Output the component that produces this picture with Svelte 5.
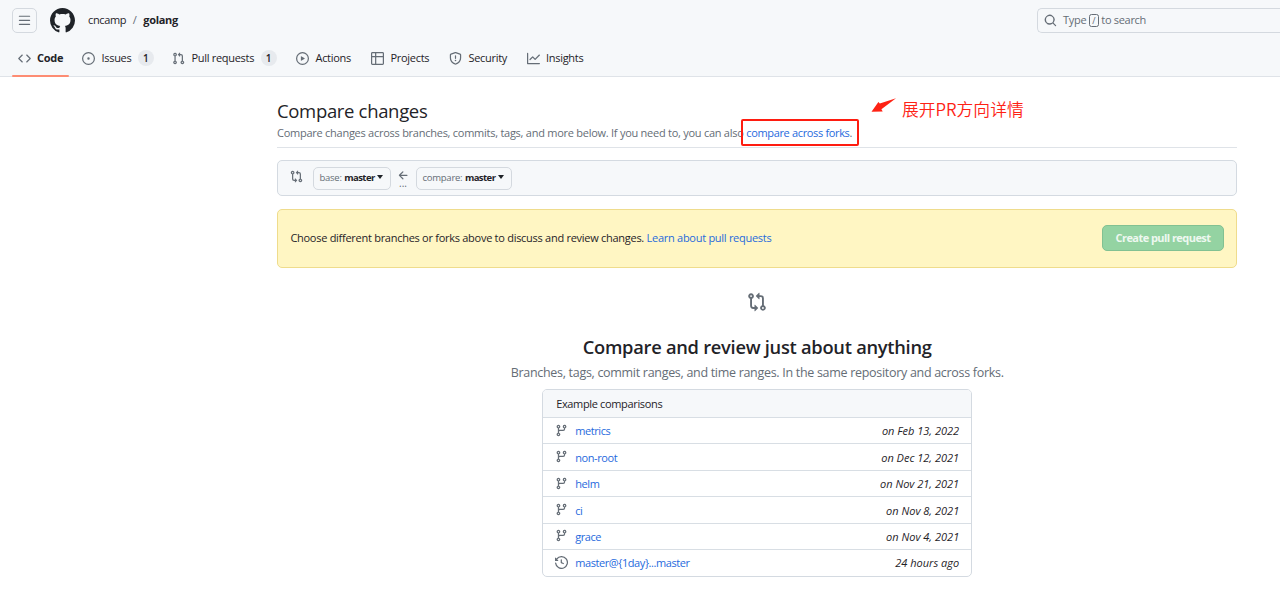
<script>
  const icons = {
    code: 'm11.28 3.22 4.25 4.25a.75.75 0 0 1 0 1.06l-4.25 4.25a.749.749 0 0 1-1.275-.326.749.749 0 0 1 .215-.734L13.94 8l-3.72-3.72a.749.749 0 0 1 .326-1.275.749.749 0 0 1 .734.215Zm-6.56 0a.751.751 0 0 1 1.042.018.751.751 0 0 1 .018 1.042L2.06 8l3.72 3.72a.749.749 0 0 1-.326 1.275.749.749 0 0 1-.734-.215L.47 8.53a.75.75 0 0 1 0-1.06Z',
    issue: 'M8 9.5a1.5 1.5 0 1 0 0-3 1.5 1.5 0 0 0 0 3Z M8 0a8 8 0 1 1 0 16A8 8 0 0 1 8 0ZM1.5 8a6.5 6.5 0 1 0 13 0 6.5 6.5 0 0 0-13 0Z',
    pull: 'M1.5 3.25a2.25 2.25 0 1 1 3 2.122v5.256a2.251 2.251 0 1 1-1.5 0V5.372A2.25 2.25 0 0 1 1.5 3.25Zm5.677-.177L9.573.677A.25.25 0 0 1 10 .854V2.5h1A2.5 2.5 0 0 1 13.5 5v5.628a2.251 2.251 0 1 1-1.5 0V5a1 1 0 0 0-1-1h-1v1.646a.25.25 0 0 1-.427.177L7.177 3.427a.25.25 0 0 1 0-.354ZM3.75 2.5a.75.75 0 1 0 0 1.5.75.75 0 0 0 0-1.5Zm0 9.5a.75.75 0 1 0 0 1.5.75.75 0 0 0 0-1.5Zm8.25.75a.75.75 0 1 0 1.5 0 .75.75 0 0 0-1.5 0Z',
    play: 'M8 0a8 8 0 1 1 0 16A8 8 0 0 1 8 0ZM1.5 8a6.5 6.5 0 1 0 13 0 6.5 6.5 0 0 0-13 0Zm4.879-2.773 4.264 2.559a.25.25 0 0 1 0 .428l-4.264 2.559A.25.25 0 0 1 6 10.559V5.442a.25.25 0 0 1 .379-.215Z',
    table: 'M0 1.75C0 .784.784 0 1.75 0h12.5C15.216 0 16 .784 16 1.75v12.5A1.75 1.75 0 0 1 14.25 16H1.75A1.75 1.75 0 0 1 0 14.25ZM6.5 6.5v8h7.75a.25.25 0 0 0 .25-.25V6.5Zm8-1.5V1.75a.25.25 0 0 0-.25-.25H6.5V5Zm-13 1.5v7.75c0 .138.112.25.25.25H5v-8ZM5 5V1.5H1.75a.25.25 0 0 0-.25.25V5Z',
    shield: 'M7.467.133a1.748 1.748 0 0 1 1.066 0l5.25 1.68A1.75 1.75 0 0 1 15 3.48V7c0 1.566-.32 3.182-1.303 4.682-.983 1.498-2.585 2.813-5.032 3.855a1.697 1.697 0 0 1-1.33 0c-2.447-1.042-4.049-2.357-5.032-3.855C1.32 10.182 1 8.566 1 7V3.48a1.75 1.75 0 0 1 1.217-1.667Zm.61 1.429a.25.25 0 0 0-.153 0l-5.25 1.68a.25.25 0 0 0-.174.238V7c0 1.358.275 2.666 1.057 3.86.784 1.194 2.121 2.34 4.366 3.297a.196.196 0 0 0 .154 0c2.245-.956 3.582-2.104 4.366-3.298C13.225 9.666 13.5 8.36 13.5 7V3.48a.251.251 0 0 0-.174-.237l-5.25-1.68ZM8.75 4.75v3a.75.75 0 0 1-1.5 0v-3a.75.75 0 0 1 1.5 0ZM9 10.5a1 1 0 1 1-2 0 1 1 0 0 1 2 0Z',
    graph: 'M1.5 1.75V13.5h13.75a.75.75 0 0 1 0 1.5H.75a.75.75 0 0 1-.75-.75V1.75a.75.75 0 0 1 1.5 0Zm14.28 2.53-5.25 5.25a.75.75 0 0 1-1.06 0L7 7.06 4.28 9.78a.751.751 0 0 1-1.042-.018.751.751 0 0 1-.018-1.042l3.25-3.25a.75.75 0 0 1 1.06 0L10 7.94l4.72-4.72a.751.751 0 0 1 1.042.018.751.751 0 0 1 .018 1.042Z',
    menu: 'M1 2.75A.75.75 0 0 1 1.75 2h12.5a.75.75 0 0 1 0 1.5H1.75A.75.75 0 0 1 1 2.75Zm0 5A.75.75 0 0 1 1.75 7h12.5a.75.75 0 0 1 0 1.5H1.75A.75.75 0 0 1 1 7.75ZM1.75 12h12.5a.75.75 0 0 1 0 1.5H1.75a.75.75 0 0 1 0-1.5Z',
    search: 'M10.68 11.74a6 6 0 0 1-7.922-8.982 6 6 0 0 1 8.982 7.922l3.04 3.04a.749.749 0 0 1-.326 1.275.749.749 0 0 1-.734-.215ZM11.5 7a4.499 4.499 0 1 0-8.997 0A4.499 4.499 0 0 0 11.5 7Z',
    mark: 'M8 0c4.42 0 8 3.58 8 8a8.013 8.013 0 0 1-5.45 7.59c-.4.08-.55-.17-.55-.38 0-.27.01-1.13.01-2.2 0-.75-.25-1.23-.54-1.48 1.78-.2 3.65-.88 3.65-3.95 0-.88-.31-1.59-.82-2.15.08-.2.36-1.02-.08-2.12 0 0-.67-.22-2.2.82-.64-.18-1.32-.27-2-.27-.68 0-1.36.09-2 .27-1.53-1.03-2.2-.82-2.2-.82-.44 1.1-.16 1.92-.08 2.12-.51.56-.82 1.28-.82 2.15 0 3.06 1.86 3.75 3.64 3.95-.23.2-.44.55-.51 1.07-.46.21-1.61.55-2.33-.66-.15-.24-.6-.83-1.23-.82-.67.01-.27.38.01.53.34.19.73.9.82 1.13.16.45.68 1.31 2.69.94 0 .67.01 1.3.01 1.49 0 .21-.15.45-.55.38A7.995 7.995 0 0 1 0 8c0-4.42 3.58-8 8-8Z',
    compare: 'M9.573.677A.25.25 0 0 1 10 .854V2.5h1A2.5 2.5 0 0 1 13.5 5v5.628a2.251 2.251 0 1 1-1.5 0V5a1 1 0 0 0-1-1h-1v1.646a.25.25 0 0 1-.427.177L7.177 3.427a.25.25 0 0 1 0-.354ZM6 12v-1.646a.25.25 0 0 1 .427-.177l2.396 2.396a.25.25 0 0 1 0 .354l-2.396 2.396A.25.25 0 0 1 6 15.146V13.5H5A2.5 2.5 0 0 1 2.5 11V5.372a2.25 2.25 0 1 1 1.5 0V11a1 1 0 0 0 1 1ZM4 3.25a.75.75 0 1 0-1.5 0 .75.75 0 0 0 1.5 0ZM12.75 12a.75.75 0 1 0 0 1.5.75.75 0 0 0 0-1.5Z',
    arrow: 'M7.78 12.53a.75.75 0 0 1-1.06 0L2.47 8.28a.75.75 0 0 1 0-1.06l4.25-4.25a.751.751 0 0 1 1.042.018.751.751 0 0 1 .018 1.042L4.81 7h7.44a.75.75 0 0 1 0 1.5H4.81l2.97 2.97a.75.75 0 0 1 0 1.06Z',
    branch: 'M9.5 3.25a2.25 2.25 0 1 1 3 2.122V6A2.5 2.5 0 0 1 10 8.5H6a1 1 0 0 0-1 1v1.128a2.251 2.251 0 1 1-1.5 0V5.372a2.25 2.25 0 1 1 1.5 0v1.836A2.493 2.493 0 0 1 6 7h4a1 1 0 0 0 1-1v-.628A2.25 2.25 0 0 1 9.5 3.25Zm-6 0a.75.75 0 1 0 1.5 0 .75.75 0 0 0-1.5 0Zm8.25-.75a.75.75 0 1 0 0 1.5.75.75 0 0 0 0-1.5ZM4.25 12a.75.75 0 1 0 0 1.5.75.75 0 0 0 0-1.5Z',
    history: 'm.427 1.927 1.215 1.215a8.002 8.002 0 1 1-1.6 5.685.75.75 0 1 1 1.493-.154 6.5 6.5 0 1 0 1.18-4.458l1.358 1.358A.25.25 0 0 1 3.896 6H.25A.25.25 0 0 1 0 5.75V2.104a.25.25 0 0 1 .427-.177ZM7.75 4a.75.75 0 0 1 .75.75v2.992l2.028.812a.75.75 0 0 1-.557 1.392l-2.5-1A.751.751 0 0 1 7 8.25v-3.5A.75.75 0 0 1 7.75 4Z',
  };

  const tabs = [
    { label: 'Code', icon: 'code', width: 64, active: true },
    { label: 'Issues', icon: 'issue', width: 90, count: 1 },
    { label: 'Pull requests', icon: 'pull', width: 124, count: 1 },
    { label: 'Actions', icon: 'play', width: 75 },
    { label: 'Projects', icon: 'table', width: 78 },
    { label: 'Security', icon: 'shield', width: 77.5 },
    { label: 'Insights', icon: 'graph', width: 70 },
  ];

  const examples = [
    { name: 'metrics', time: 'on Feb 13, 2022' },
    { name: 'non-root', time: 'on Dec 12, 2021' },
    { name: 'helm', time: 'on Nov 21, 2021' },
    { name: 'ci', time: 'on Nov 8, 2021' },
    { name: 'grace', time: 'on Nov 4, 2021' },
    { name: 'master@{1day}...master', time: '24 hours ago', icon: 'history' },
  ];
</script>

{#snippet icon(name, size = 13)}
  <svg class="icon" width={size} height={size} viewBox="0 0 16 16" fill="currentColor" aria-hidden="true"><path fill-rule="evenodd" d={icons[name]} /></svg>
{/snippet}

<header>
  <div class="top">
    <button class="menu">{@render icon('menu')}</button>
    <span class="mark">{@render icon('mark', 25)}</span>
    <span class="owner">cncamp</span><span class="slash">/</span><strong class="repo">golang</strong>
    <div class="search">{@render icon('search')}<span class="type">Type</span><kbd>/</kbd><span class="hint">to search</span></div>
  </div>
  <nav>
    {#each tabs as tab}
      <div class="tab" class:active={tab.active} style:width="{tab.width}px">
        {@render icon(tab.icon)}<span>{tab.label}</span>{#if tab.count}<b class="count">{tab.count}</b>{/if}
      </div>
    {/each}
  </nav>
</header>

<main>
  <h1>Compare changes</h1>
  <p class="sub"><span>Compare changes across branches, commits, tags, and more below. If you need to, you can also</span> <span class="forks"><a href="#forks">compare across forks</a>.<i class="frame"></i></span></p>

  <div class="range">
    <span class="range-icon">{@render icon('compare')}</span>
    <button class="ref base"><span>base:</span> <b>master</b><i class="caret"></i></button>
    <div class="dir">{@render icon('arrow', 13)}<span>...</span></div>
    <button class="ref cmp"><span>compare:</span> <b>master</b><i class="caret"></i></button>
  </div>

  <div class="flash">
    <p><span class="choose">Choose different branches or forks above to discuss and review changes.</span> <a href="#learn">Learn about pull requests</a></p>
    <button class="create" disabled>Create pull request</button>
  </div>

  <section>
    <div class="big">{@render icon('compare', 20)}</div>
    <h2>Compare and review just about anything</h2>
    <p class="lead">Branches, tags, commit ranges, and time ranges. In the same repository and across forks.</p>
    <div class="box">
      <div class="head">Example comparisons</div>
      {#each examples as row}
        <div class="row">
          <span class="row-icon">{@render icon(row.icon ?? 'branch')}</span>
          <a href="#compare">{row.name}</a>
          <em>{row.time}</em>
        </div>
      {/each}
    </div>
  </section>

  <div class="note">
    <svg width="26" height="16" viewBox="0 0 26 16"><path fill="#fe2214" d="M25 .3 8.8 5.6 7.4 4 .5 13.8l11.2-.4-1.3-2.2Z" /></svg>
    <span>展开PR方向详情</span>
  </div>
</main>

<style>
  :global(body) { background: #fff; overflow: hidden; }
  :global(#app) { font-family: "Open Sans", "Noto Sans", sans-serif; font-size: 11px; color: #1f2328; line-height: 16px; }
  * { box-sizing: border-box; }
  h1, h2, p { margin: 0; font-weight: 400; }
  button { font: inherit; margin: 0; padding: 0; border: 1px solid #d4d9df; background: #f6f8fa; }
  a { color: #1f6add; text-decoration: none; }
  .icon { display: block; flex: none; color: #656d76; }
  header { height: 77px; background: #f6f8fa; border-bottom: 1px solid #dfe3e8; }
  .top { display: flex; align-items: center; height: 40px; padding-left: 12px; white-space: nowrap; }
  .menu { width: 25px; height: 25px; border-radius: 5px; display: grid; place-items: center; }
  .mark { margin: 0 13px; }
  .mark .icon { color: #1f2328; }
  .owner { letter-spacing: -.35px; }
  .slash { margin: 0 6.5px; color: #656d76; }
  .repo { font-weight: 700; letter-spacing: -.3px; }
  .search { margin-left: auto; width: 243px; height: 25px; border: 1px solid #d4d9df; border-right: 0; border-radius: 5px 0 0 5px; display: flex; align-items: center; padding-left: 6px; color: #656d76; }
  .type { margin-left: 6px; letter-spacing: -.3px; }
  kbd { width: 10px; height: 13px; margin: 0 2.5px; border: 1px solid #656d76; border-radius: 2.5px; font: 9px/11px "Open Sans", sans-serif; text-align: center; }
  .hint { letter-spacing: -.3px; }
  nav { display: flex; height: 36px; padding-left: 12px; }
  .tab { display: flex; align-items: center; gap: 6.5px; padding-left: 6px; height: 36px; flex: none; white-space: nowrap; letter-spacing: -.3px; }
  .active { position: relative; font-weight: 700; gap: 6px; }
  .active::after { content: ""; position: absolute; left: 0; bottom: -1px; width: 57px; height: 2px; background: #fd8c73; border-radius: 2px; }
  .count { width: 16px; height: 16px; border-radius: 8px; background: #e7eaee; text-align: center; font: 600 10px/16px "Open Sans", sans-serif; letter-spacing: 0; }

  main { position: relative; width: 960.4px; margin-left: 277px; padding-top: 20px; }
  h1 { font-size: 18.5px; line-height: 27px; letter-spacing: -.33px; }
  .sub { height: 24px; line-height: 17px; border-bottom: 1px solid #dfe3e8; color: #656d76; white-space: nowrap; letter-spacing: -.257px; }
  .sub a { letter-spacing: -.34px; }
  .forks { position: relative; }
  .frame { position: absolute; left: -5.5px; top: -6px; width: 118px; height: 27px; border: 2px solid #fe1c10; border-radius: 2px; }
  .range { margin-top: 12px; height: 36px; border: 1px solid #d4dae1; border-radius: 5px; background: #f6f8fa; display: flex; align-items: center; padding-left: 12px; }
  .range-icon { margin: -4px 9.5px 0 0; }
  .ref { height: 23px; border-radius: 5px; font-size: 9.5px; color: #656d76; display: flex; align-items: center; gap: 2.5px; padding-left: 6px; white-space: nowrap; letter-spacing: -.25px; }
  .ref b { color: #1f2328; font-weight: 700; letter-spacing: -.55px; }
  .base { width: 78px; }
  .cmp { width: 96px; }
  .caret { border: 3.5px solid transparent; border-top: 4px solid #1f2328; border-bottom: 0; margin-top: -2px; }
  .dir { width: 25px; display: flex; flex-direction: column; align-items: center; color: #656d76; }
  .dir span { font-size: 10px; line-height: 8px; margin-top: -3px; height: 9px; }
  .flash { margin-top: 13px; height: 58.5px; border: 1px solid #efdc8c; border-radius: 5px; background: #fff6c3; display: flex; align-items: center; justify-content: space-between; padding: 0 12.4px; white-space: nowrap; letter-spacing: -.275px; }
  .create { width: 122px; height: 26px; margin-top: -1px; border-color: #82c192; border-radius: 5px; background: #94d3a2; color: #eef8f0; font-weight: 700; letter-spacing: -.55px; }
  section { display: flex; flex-direction: column; align-items: center; padding-top: 24.5px; }
  h2 { font-size: 18.3px; font-weight: 600; line-height: 28px; margin-top: 21px; letter-spacing: -.27px; }
  .lead { font-size: 12.5px; line-height: 20px; color: #656d76; margin-top: 2px; white-space: nowrap; letter-spacing: -.3px; }
  .box { width: 430px; margin-top: 6px; border: 1px solid #d4dae1; border-radius: 5px; overflow: hidden; }
  .head { height: 27px; padding-left: 13px; line-height: 28px; background: #f6f8fa; letter-spacing: -.35px; }
  .row { height: 26.45px; border-top: 1px solid #d8dee4; display: flex; align-items: center; padding: 1px 12px 0; white-space: nowrap; }
  .row-icon { width: 20px; margin-top: -2px; }
  .row a { letter-spacing: -.42px; }
  em { margin-left: auto; }
  .note { position: absolute; left: 594px; top: 21px; display: flex; gap: 5px; color: #fe2214; font: 350 16.8px/22px "Noto Sans CJK SC", sans-serif; white-space: nowrap; }
</style>
